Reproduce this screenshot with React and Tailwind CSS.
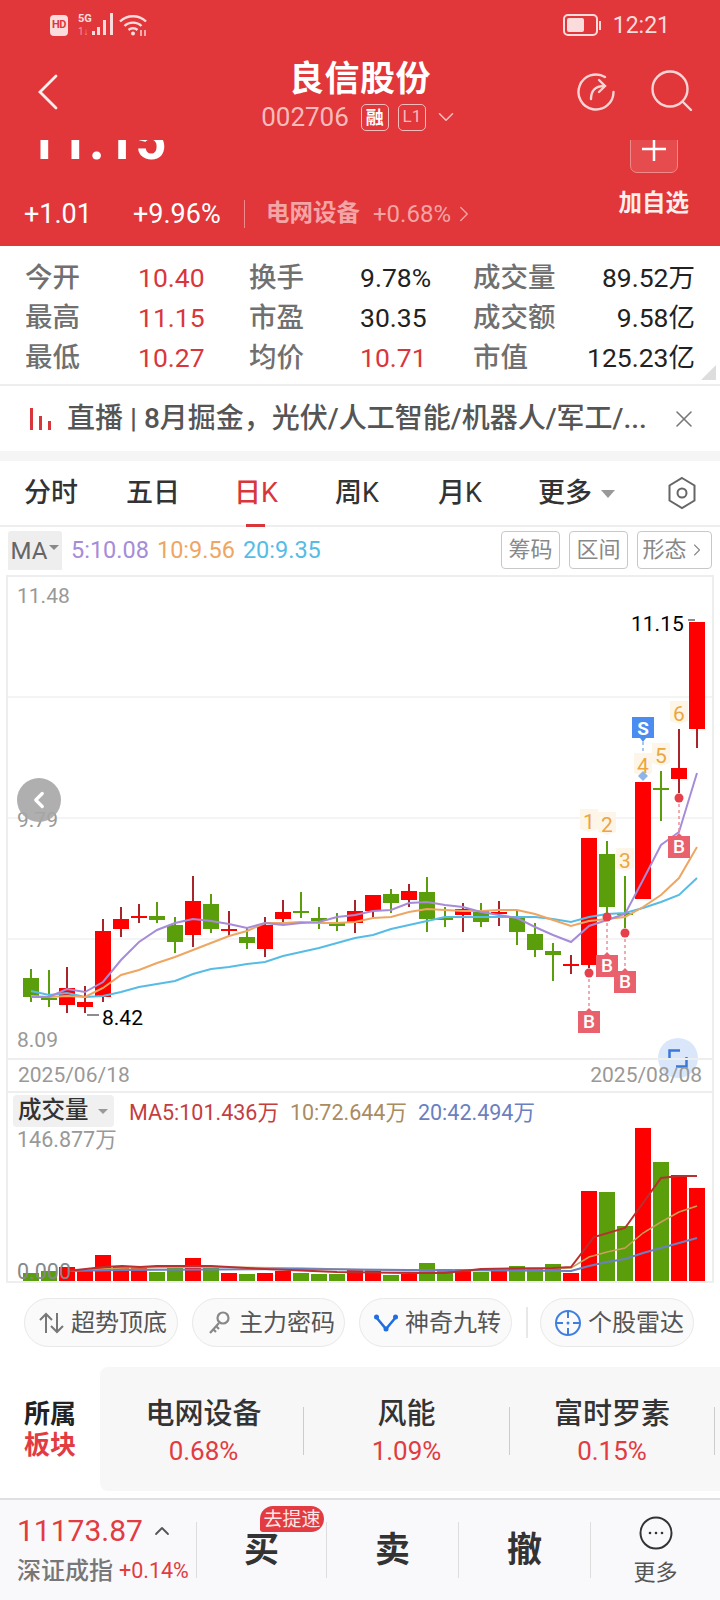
import React from 'react';
import { ChevronLeft, ChevronRight, ChevronDown, ChevronUp, X } from 'lucide-react';

const RED = '#ff0000';
const GREEN = '#5a9e0c';

// [wickTop, bodyTop, bodyBottom, wickBottom, up]
const candles = [
  [969, 978, 997, 1002, 0], [970, 998, 1000, 1007, 0], [967, 988, 1005, 1013, 1], [986, 1002, 1007, 1013, 1],
  [919, 931, 997, 1002, 1], [907, 919, 929, 937, 1], [904, 916, 917, 923, 1], [902, 916, 920, 923, 0],
  [917, 925, 942, 953, 0], [876, 901, 935, 947, 1], [894, 904, 929, 933, 0], [911, 929, 931, 936, 1],
  [927, 937, 943, 949, 0], [917, 925, 949, 957, 1], [900, 912, 919, 923, 1], [892, 911, 913, 918, 0],
  [907, 918, 921, 929, 0], [913, 923, 926, 931, 0], [900, 911, 923, 933, 1], [895, 895, 911, 918, 1],
  [889, 894, 903, 913, 0], [884, 891, 900, 907, 1], [877, 892, 919, 932, 0], [907, 918, 920, 927, 0],
  [903, 909, 915, 932, 1], [903, 911, 922, 927, 0], [901, 912, 914, 926, 1], [911, 918, 932, 945, 0],
  [923, 934, 950, 957, 0], [943, 951, 955, 981, 0], [955, 964, 966, 974, 1], [838, 838, 965, 968, 1],
  [841, 854, 907, 917, 0], [876, 913, 914, 928, 0], [782, 782, 899, 899, 1], [771, 788, 790, 821, 0],
  [729, 768, 779, 793, 1], [622, 622, 729, 748, 1],
];

const ma5 = [997, 997, 989, 992, 982, 960, 942, 930, 923, 919, 921, 924, 928, 923, 925, 923, 922, 917, 915, 911, 910, 903, 902, 905, 907, 912, 915, 918, 927, 935, 942, 926, 920, 914, 880, 845, 832, 773];
const ma10 = [996, 997, 996, 997, 988, 975, 970, 963, 957, 950, 943, 936, 931, 923, 923, 922, 923, 923, 922, 918, 917, 912, 909, 910, 911, 911, 910, 910, 914, 920, 926, 921, 919, 917, 907, 895, 878, 847];
const ma20 = [991, 995, 993, 997, 996, 992, 987, 984, 981, 974, 969, 967, 964, 962, 956, 952, 948, 943, 938, 935, 929, 925, 921, 917, 917, 917, 917, 917, 917, 919, 922, 917, 914, 913, 908, 902, 895, 878];

// volume bars: [top, up]
const volumes = [
  [1273, 0], [1271, 0], [1267, 1], [1271, 1], [1255, 1], [1267, 1], [1266, 1], [1272, 0], [1268, 0], [1258, 1],
  [1268, 0], [1273, 1], [1274, 0], [1273, 1], [1271, 1], [1273, 0], [1274, 0], [1274, 0], [1270, 1], [1270, 1],
  [1275, 0], [1274, 1], [1263, 0], [1269, 0], [1269, 1], [1272, 0], [1270, 1], [1266, 0], [1268, 0], [1264, 0],
  [1273, 1], [1191, 1], [1192, 0], [1226, 0], [1128, 1], [1162, 0], [1175, 1], [1188, 1],
];
const volMa5 = [[67, 1271], [104, 1267], [122, 1266], [140, 1267], [157, 1266], [211, 1266], [265, 1269], [337, 1272], [409, 1273], [445, 1273], [481, 1269], [553, 1268], [571, 1267], [594, 1237], [625, 1228], [643, 1203], [661, 1178], [679, 1176], [697, 1176]];
const volMa10 = [[67, 1271], [122, 1268], [211, 1267], [300, 1268], [409, 1271], [571, 1268], [589, 1257], [607, 1252], [625, 1248], [643, 1233], [661, 1222], [679, 1212], [697, 1206]];
const volMa20 = [[67, 1271], [122, 1270], [300, 1269], [409, 1270], [571, 1271], [589, 1266], [607, 1262], [625, 1259], [643, 1253], [661, 1248], [679, 1243], [697, 1238]];

const cx = (i) => 31 + 18 * i;
const toPoints = (arr) => arr.map((y, i) => `${cx(i)},${y}`).join(' ');
const pairPoints = (arr) => arr.map((p) => p.join(',')).join(' ');

const numberTags = [[589, 821, '1'], [607, 824, '2'], [625, 860, '3'], [643, 765, '4'], [661, 755, '5'], [679, 713, '6']];
// [x, dotY, boxTop]
const buyTags = [[589, 973, 1010], [607, 917, 954], [625, 933, 970], [679, 798, 835]];

const stats = [
  ['今开', '10.40', '换手', '9.78%', '成交量', '89.52万'],
  ['最高', '11.15', '市盈', '30.35', '成交额', '9.58亿'],
  ['最低', '10.27', '均价', '10.71', '市值', '125.23亿'],
];

const StatusBar = () => (
  <div className="flex h-[50px] items-center justify-between pl-[50px] pr-[50px] text-[#fbdcdc]">
    <div className="flex items-center">
      <div className="flex h-[21px] w-[18px] items-center justify-center rounded-[4px] bg-[#fbdcdc] text-[11px] font-bold tracking-[-0.500px] text-[#e1363a]">HD</div>
      <svg width="36" height="24" viewBox="0 0 36 24" className="ml-[10px]">
        <text x="0" y="9" fontSize="11" fontWeight="700" fill="#fbdcdc" fontFamily="Roboto">5G</text>
        <text x="0" y="22" fontSize="10" fill="#f39a9a" fontFamily="Roboto">1↓</text>
        <rect x="14" y="18" width="3" height="4" fill="#fbdcdc" />
        <rect x="19" y="14" width="3" height="8" fill="#fbdcdc" />
        <rect x="25" y="7" width="3" height="15" fill="#fbdcdc" />
        <rect x="32" y="0" width="3" height="22" fill="#fbdcdc" />
      </svg>
      <svg width="30" height="24" viewBox="0 0 30 24" className="ml-[4px]" fill="none" stroke="#fbdcdc" strokeWidth="2.400">
        <path d="M2 8.500c7-7 19-7 26 0" />
        <path d="M6.500 13c4.500-4.500 12.500-4.500 17 0" />
        <path d="M10.500 17c2.500-2.300 6.500-2.300 9 0" />
        <circle cx="15" cy="20.500" r="2" fill="#fbdcdc" stroke="none" />
        <path d="M23 23v-6M27 17v6" strokeWidth="1.400" />
      </svg>
    </div>
    <div className="flex items-center">
      <div className="flex h-[22px] w-[35px] items-center rounded-[5px] border-2 border-[#fbdcdc] p-[2px]">
        <div className="h-full w-[17px] rounded-[2px] bg-[#fbdcdc]" />
      </div>
      <div className="ml-[1px] h-[9px] w-[2px] bg-[#fbdcdc]" />
      <span className="ml-[12px] text-[23px] leading-none">12:21</span>
    </div>
  </div>
);

const NavBar = () => (
  <div className="grid h-[90px] grid-cols-[1fr_auto_1fr] text-white">
    <div className="pl-[37px] pt-[24px]">
      <svg width="22" height="36" viewBox="0 0 22 36" fill="none" stroke="#fdeeee" strokeWidth="2.800" strokeLinecap="round">
        <path d="M19 2L3 18l16 16" />
      </svg>
    </div>
    <div className="flex flex-col items-center pt-[8px]">
      <div className="text-[35px] font-bold leading-[44px] tracking-[0.500px]">良信股份</div>
      <div className="flex h-[30px] items-center text-[#f6bcbc]">
        <span className="text-[26px] leading-none">002706</span>
        <span className="ml-[12px] flex h-[27px] w-[28px] items-center justify-center rounded-[5px] border border-[#f6bcbc] text-[18px] font-bold text-white">融</span>
        <span className="ml-[9px] flex h-[27px] w-[28px] items-center justify-center rounded-[5px] border border-[#f6bcbc] text-[17px]">L1</span>
        <ChevronDown size={26} strokeWidth={1.500} className="ml-[7px]" />
      </div>
    </div>
    <div className="flex justify-end pr-[25px] pt-[22px]">
      <svg width="40" height="40" viewBox="0 0 40 40" fill="none" stroke="#f9d4d4" strokeWidth="2.400" strokeLinecap="round">
        <path d="M29 5A17.500 17.500 0 1 0 37.500 20" />
        <path d="M15 27c0-8 4-13 13-13" />
        <path d="M23 8l6 6-6 6" />
      </svg>
      <svg width="46" height="46" viewBox="0 0 46 46" fill="none" stroke="#f9d4d4" strokeWidth="2.400" strokeLinecap="round" className="ml-[33px] -mt-[4px]">
        <circle cx="21" cy="21" r="17.500" />
        <path d="M34 34l8 8" />
      </svg>
    </div>
  </div>
);

const PriceStrip = () => (
  <div className="flex h-[33px] justify-between overflow-hidden pl-[27px] pr-[42px]">
    <div className="-mt-[26px] text-[54px] font-bold leading-[54px] text-white">11.15</div>
    <div className="-mt-[15px] flex h-[48px] w-[48px] items-center justify-center rounded-[7px] border border-[#ee8a8a] bg-[#e64b4e] text-white">
      <svg width="24" height="24" viewBox="0 0 24 24" stroke="#fff" strokeWidth="2.500">
        <path d="M0 12h24M12 0v24" />
      </svg>
    </div>
  </div>
);

const QuoteRow = () => (
  <div className="flex h-[73px] justify-between pl-[24px] pr-[31px]">
    <div className="mt-[26px] flex h-[30px] items-center">
      <span className="w-[109px] text-[27px] leading-none text-white">+1.01</span>
      <span className="w-[111px] text-[27px] leading-none text-white">+9.96%</span>
      <span className="h-[28px] w-px bg-[#ee8a8a]" />
      <span className="ml-[21px] text-[23.500px] font-bold leading-none text-[#f3a4a4]">电网设备</span>
      <span className="ml-[13px] text-[24px] leading-none text-[#f3a4a4]">+0.68%</span>
      <ChevronRight size={26} strokeWidth={1.300} className="text-[#f3a4a4]" />
    </div>
    <div className="mt-[16px] text-[23.500px] font-bold leading-[28px] text-[#fdeeee]">加自选</div>
  </div>
);

const StatsPanel = () => (
  <div className="relative h-[140px] border-b-2 border-[#eeeeee] pt-[12px]">
    {stats.map((row) => (
      <div key={row[0]} className="flex h-[40px] items-center pl-[25px] pr-[25px] text-[26.500px] leading-none">
        <span className="w-[113px] text-[27.500px] font-medium text-[#707070]">{row[0]}</span>
        <span className="w-[111px] text-[#d9363c]">{row[1]}</span>
        <span className="w-[111px] text-[27.500px] font-medium text-[#707070]">{row[2]}</span>
        <span className={`w-[113px] ${row[3] === '10.71' ? 'text-[#d9363c]' : 'text-[#222222]'}`}>{row[3]}</span>
        <span className="text-[27.500px] font-medium text-[#707070]">{row[4]}</span>
        <span className="ml-auto text-[#222222]">{row[5]}</span>
      </div>
    ))}
    <div className="absolute bottom-[4px] right-[4px] h-0 w-0 border-b-[15px] border-l-[15px] border-b-[#dddddd] border-l-transparent" />
  </div>
);

const NoticeRow = () => (
  <div className="flex h-[75px] items-center border-b-[10px] border-[#f5f5f5] pl-[30px] pr-[22px]">
    <svg width="22" height="24" viewBox="0 0 22 24" fill="#d9363c">
      <rect x="0" y="1" width="3" height="22" />
      <rect x="9" y="9" width="3" height="14" />
      <rect x="18" y="14" width="3" height="9" />
    </svg>
    <span className="ml-[15px] whitespace-nowrap text-[28px] font-medium leading-none text-[#555555]">直播 | 8月掘金，光伏/人工智能/机器人/军工/...</span>
    <X size={28} strokeWidth={1.300} className="ml-auto text-[#777777]" />
  </div>
);

const Tabs = () => (
  <div className="relative flex h-[66px] items-center border-b-2 border-[#eeeeee] pl-[24px] text-[27px] font-medium leading-none text-[#333333]">
    <span className="w-[102px]">分时</span>
    <span className="w-[108px]">五日</span>
    <span className="w-[101px] text-[#d9363c]">日<span className="font-normal">K</span></span>
    <span className="w-[103px]">周<span className="font-normal">K</span></span>
    <span className="w-[100px]">月<span className="font-normal">K</span></span>
    <span>更多</span>
    <span className="ml-[9px] mt-[2px] h-0 w-0 border-x-[7px] border-t-[8px] border-x-transparent border-t-[#999999]" />
    <svg width="30" height="34" viewBox="0 0 30 34" fill="none" stroke="#666666" strokeWidth="2" className="ml-[52px]">
      <path d="M15 2l12.500 7.500v15L15 32 2.500 24.500v-15z" />
      <circle cx="15" cy="17" r="4.500" />
    </svg>
    <div className="absolute bottom-[-2px] left-[246px] h-[3px] w-[19px] bg-[#d9363c]" />
  </div>
);

const MaRow = () => (
  <div className="flex h-[48px] items-start pl-[8px] pt-[4px]">
    <div className="flex h-[39px] w-[54px] items-center justify-center gap-[2px] rounded-t-[3px] bg-[#eeeeee] text-[24px] leading-none text-[#666666]">
      MA
      <span className="-mt-[6px] h-0 w-0 border-x-[5px] border-t-[5px] border-x-transparent border-t-[#888888]" />
    </div>
    <div className="flex h-[39px] items-center text-[23.500px] leading-none">
      <span className="ml-[9px] text-[#a68cd8]">5:10.08</span>
      <span className="ml-[8px] text-[#eea662]">10:9.56</span>
      <span className="ml-[8px] text-[#56bce6]">20:9.35</span>
    </div>
    <div className="ml-auto mr-[8px] flex gap-[9px] text-[22px] leading-none text-[#888888]">
      <span className="flex h-[38px] w-[59px] items-center justify-center rounded-[4px] border border-[#c8c8c8]">筹码</span>
      <span className="flex h-[38px] w-[59px] items-center justify-center rounded-[4px] border border-[#c8c8c8]">区间</span>
      <span className="flex h-[38px] w-[75px] items-center justify-center rounded-[4px] border border-[#c8c8c8]">
        形态
        <ChevronRight size={20} strokeWidth={1.300} />
      </span>
    </div>
  </div>
);

const CandleChart = () => (
  <div className="relative mx-[6px] h-[483px] border-x-2 border-t-2 border-[#eeeeee]">
    <svg width="704" height="481" viewBox="8 577 704 481" className="block">
      {[697, 818, 939].map((y) => (
        <line key={y} x1="8" x2="712" y1={y} y2={y} stroke="#f1f1f1" strokeWidth="1.500" />
      ))}
      {candles.map(([wt, bt, bb, wb, up], i) => (
        <g key={i}>
          <line x1={cx(i)} x2={cx(i)} y1={wt} y2={wb} stroke={up ? '#a8262b' : GREEN} strokeWidth="2" />
          <rect x={cx(i) - 8} y={bt} width="16" height={Math.max(bb - bt, 2)} fill={up ? RED : GREEN} />
        </g>
      ))}
      <polyline points={toPoints(ma20)} fill="none" stroke="#56bce6" strokeWidth="2" />
      <polyline points={toPoints(ma10)} fill="none" stroke="#eea662" strokeWidth="2" />
      <polyline points={toPoints(ma5)} fill="none" stroke="#a68cd8" strokeWidth="2" />
      <line x1="643" x2="643" y1="742" y2="772" stroke="#8fb4ea" strokeWidth="1.500" strokeDasharray="3 3" />
      {numberTags.map(([x, y, n]) => (
        <g key={n}>
          <path d={`M${x - 9} ${y - 12}h18v20l-9 3-9-3z`} fill="#fdf5e8" />
          <text x={x} y={y + 8} textAnchor="middle" fontSize="21" fill="#eca63e" fontFamily="Roboto">{n}</text>
        </g>
      ))}
      <path d="M643 771l5 5-5 5-5-5z" fill="#8fb4ea" />
      <path d="M632 717h22v21h-8l-3 4-3-4h-8z" fill="#4b8cf0" />
      <text x="643" y="735" textAnchor="middle" fontSize="19" fontWeight="700" fill="#fff" fontFamily="Roboto">S</text>
      {buyTags.map(([x, dot, top]) => (
        <g key={x}>
          <line x1={x} x2={x} y1={dot} y2={top} stroke="#ee8f98" strokeWidth="1.500" strokeDasharray="3 3" />
          <circle cx={x} cy={dot} r="4.500" fill="#e5404b" />
          <path d={`M${x - 11} ${top + 1}h8l3-3 3 3h8v22h-22z`} fill="#e9616c" />
          <text x={x} y={top + 18} textAnchor="middle" fontSize="19" fontWeight="500" fill="#fff" fontFamily="Roboto">B</text>
        </g>
      ))}
      <line x1="87" x2="99" y1="1015" y2="1015" stroke="#666666" strokeWidth="1.500" />
      <line x1="688" x2="695" y1="620" y2="620" stroke="#666666" strokeWidth="1.500" />
    </svg>
    <span className="absolute left-[9px] top-[4px] text-[21px] leading-[30px] text-[#999999]">11.48</span>
    <span className="absolute left-[9px] top-[228px] text-[21px] leading-[30px] text-[#999999]">9.79</span>
    <span className="absolute left-[9px] top-[448px] text-[21px] leading-[30px] text-[#999999]">8.09</span>
    <span className="absolute left-[94px] top-[426px] text-[21px] leading-[30px] text-black">8.42</span>
    <span className="absolute left-[623px] top-[32px] text-[21px] leading-[30px] text-black">11.15</span>
    <div className="absolute left-[9px] top-[201px] flex h-[44px] w-[44px] items-center justify-center rounded-full bg-[#a6a6a6]/90 text-white">
      <ChevronLeft size={26} strokeWidth={3} />
    </div>
    <div className="absolute left-[650px] top-[461px] flex h-[40px] w-[40px] items-center justify-center rounded-full bg-[#d6e4fb]/90">
      <svg width="20" height="20" viewBox="0 0 20 20" fill="none" stroke="#3b78d8" strokeWidth="2.500">
        <path d="M1.500 10V2.500H12M18.500 9v9.500H8" />
      </svg>
    </div>
  </div>
);

const DateRow = () => (
  <div className="relative mx-[6px] flex h-[33px] items-center justify-between border-x-2 border-t-2 border-[#eeeeee] pl-[10px] pr-[10px] text-[21px] leading-none text-[#999999]">
    <span>2025/06/18</span>
    <span>2025/08/08</span>
  </div>
);

const VolumeChart = () => (
  <div className="relative mx-[6px] h-[192px] border-x-2 border-y-2 border-[#eeeeee]">
    <svg width="704" height="188" viewBox="8 1093 704 188" className="block">
      {volumes.map(([top, up], i) => (
        <rect key={i} x={cx(i) - 8} y={top} width="16" height={1281 - top} fill={up ? RED : GREEN} />
      ))}
      <polyline points={pairPoints(volMa10)} fill="none" stroke="#c9a25a" strokeWidth="1.500" />
      <polyline points={pairPoints(volMa20)} fill="none" stroke="#6a80c0" strokeWidth="2" />
      <polyline points={pairPoints(volMa5)} fill="none" stroke="#b8302f" strokeWidth="2" />
    </svg>
    <div className="absolute left-[5px] top-[2px] flex h-[32px] w-[101px] items-center rounded-[4px] bg-[#f0f0f0] pl-[5px] text-[23.500px] font-medium leading-none text-[#333333]">
      成交量
      <span className="ml-[9px] h-0 w-0 border-x-[5px] border-t-[5px] border-x-transparent border-t-[#999999]" />
    </div>
    <div className="absolute left-[121px] top-[8px] flex gap-[11px] text-[21.500px] leading-[24px]">
      <span className="text-[#c43d3f]">MA5:101.436万</span>
      <span className="text-[#a98c5f]">10:72.644万</span>
      <span className="text-[#6a80c0]">20:42.494万</span>
    </div>
    <span className="absolute left-[9px] top-[35px] text-[21.500px] leading-[24px] text-[#999999]">146.877万</span>
    <span className="absolute left-[9px] top-[167px] text-[21.500px] leading-[24px] text-[#888888]">0.000</span>
  </div>
);

const Pill = ({ className, icon, label }) => (
  <div className={`flex h-[49px] items-center rounded-full border border-[#e8e8e8] bg-[#fafafa] text-[24px] leading-none text-[#555555] ${className}`}>
    {icon}
    {label}
  </div>
);

const ToolPills = () => (
  <div className="flex h-[84px] items-start pl-[24px] pt-[15px]">
    <Pill
      className="w-[154px] pl-[13px]"
      label="超势顶底"
      icon={
        <svg width="26" height="26" viewBox="0 0 26 26" fill="none" stroke="#777777" strokeWidth="2" className="mr-[7px]">
          <path d="M8 23V4M2 10l6-6 6 6M19 3v19M13 16l6 6 6-6" />
        </svg>
      }
    />
    <Pill
      className="ml-[14px] w-[153px] pl-[15px]"
      label="主力密码"
      icon={
        <svg width="24" height="26" viewBox="0 0 24 26" fill="none" stroke="#888888" strokeWidth="2.200" className="mr-[7px]">
          <circle cx="15" cy="8" r="5.500" />
          <path d="M11 13L2 23M5 19l3 3M8 16l3 3" />
        </svg>
      }
    />
    <Pill
      className="ml-[14px] w-[153px] pl-[13px]"
      label="神奇九转"
      icon={
        <svg width="26" height="26" viewBox="0 0 26 26" fill="none" stroke="#1f6fe0" strokeWidth="2.600" className="mr-[6px]">
          <path d="M3 7l10 12L23 7" />
          <circle cx="3.500" cy="7" r="2.500" fill="#1f6fe0" stroke="none" />
          <circle cx="13" cy="19" r="2.500" fill="#1f6fe0" stroke="none" />
          <circle cx="22.500" cy="7" r="2.500" fill="#1f6fe0" stroke="none" />
        </svg>
      }
    />
    <div className="ml-[14px] mt-[9px] h-[31px] w-[2px] bg-[#e8e8e8]" />
    <Pill
      className="ml-[12px] w-[154px] pl-[13px]"
      label="个股雷达"
      icon={
        <svg width="28" height="28" viewBox="0 0 28 28" fill="none" stroke="#3f7fe0" strokeWidth="2" className="mr-[6px]">
          <circle cx="14" cy="14" r="12" />
          <path d="M14 2v7M14 19v7M2 14h7M19 14h7" />
          <circle cx="14" cy="14" r="1.500" fill="#3f7fe0" stroke="none" />
        </svg>
      }
    />
  </div>
);

const SectorItem = ({ name, pct, width }) => (
  <div className={`flex h-[48px] flex-col items-center justify-center border-r border-[#cccccc] ${width}`}>
    <span className="mt-[2px] text-[29px] font-medium leading-[37px] text-[#333333]">{name}</span>
    <span className="text-[26px] leading-[36px] text-[#e23b41]">{pct}</span>
  </div>
);

const Sectors = () => (
  <div className="flex h-[133px] border-b-2 border-[#e0e0e0] pb-[7px]">
    <div className="flex w-[100px] flex-col pl-[24px] pt-[32px] text-[26px] font-bold leading-[31px]">
      <span className="text-[#222222]">所属</span>
      <span className="text-[#e23b41]">板块</span>
    </div>
    <div className="flex flex-1 items-center overflow-hidden rounded-l-[8px] bg-[#f7f7f7] pl-[4px] pt-[4px]">
      <SectorItem name="电网设备" pct="0.68%" width="w-[200px]" />
      <SectorItem name="风能" pct="1.09%" width="w-[206px]" />
      <SectorItem name="富时罗素" pct="0.15%" width="w-[205px]" />
    </div>
  </div>
);

const Footer = () => (
  <div className="flex h-[100px] bg-[#f9f9fb] pt-[22px]">
    <div className="h-[56px] w-[197px] border-r border-[#dddddd] pl-[17px]">
      <div className="-mt-[9px] flex items-center text-[#e23b41]">
        <span className="text-[30px] leading-[36px]">11173.87</span>
        <ChevronUp size={24} strokeWidth={1.800} className="ml-[7px] text-[#555555]" />
      </div>
      <div className="mt-[10px] flex items-center whitespace-nowrap">
        <span className="text-[24px] font-medium leading-none text-[#777777]">深证成指</span>
        <span className="ml-[6px] text-[21.500px] leading-none text-[#e23b41]">+0.14%</span>
      </div>
    </div>
    <div className="relative flex h-[56px] w-[130px] items-center justify-center border-r border-[#dddddd] pt-[2px] text-[35px] font-bold text-[#333333]">
      买
      <div className="absolute left-[63px] top-[-16px] flex h-[26px] w-[64px] items-center justify-center rounded-t-[13px] rounded-bl-[3px] rounded-br-[13px] bg-[#e23b41] text-[19px] font-normal leading-none text-[#ffe5e5]">去提速</div>
    </div>
    <div className="flex h-[56px] w-[132px] items-center justify-center border-r border-[#dddddd] pt-[2px] text-[35px] font-bold text-[#333333]">卖</div>
    <div className="flex h-[56px] w-[132px] items-center justify-center border-r border-[#dddddd] pt-[2px] text-[35px] font-bold text-[#333333]">撤</div>
    <div className="flex flex-1 flex-col items-center">
      <svg width="34" height="36" viewBox="0 0 34 36" fill="none" stroke="#333333" strokeWidth="2" className="-mt-[7px]">
        <circle cx="17" cy="18" r="15.500" />
        <circle cx="11" cy="18" r="1.300" fill="#333333" stroke="none" />
        <circle cx="17" cy="18" r="1.300" fill="#333333" stroke="none" />
        <circle cx="23" cy="18" r="1.300" fill="#333333" stroke="none" />
      </svg>
      <span className="mt-[8px] text-[22px] leading-[28px] text-[#555555]">更多</span>
    </div>
  </div>
);

export default function App() {
  return (
    <div className="relative h-[1600px] w-[720px] overflow-hidden bg-white font-['Roboto','Noto_Sans_CJK_SC',sans-serif]">
      <div className="bg-[#e1363a]">
        <StatusBar />
        <NavBar />
        <PriceStrip />
        <QuoteRow />
      </div>
      <StatsPanel />
      <NoticeRow />
      <Tabs />
      <MaRow />
      <CandleChart />
      <DateRow />
      <VolumeChart />
      <ToolPills />
      <Sectors />
      <Footer />
    </div>
  );
}
